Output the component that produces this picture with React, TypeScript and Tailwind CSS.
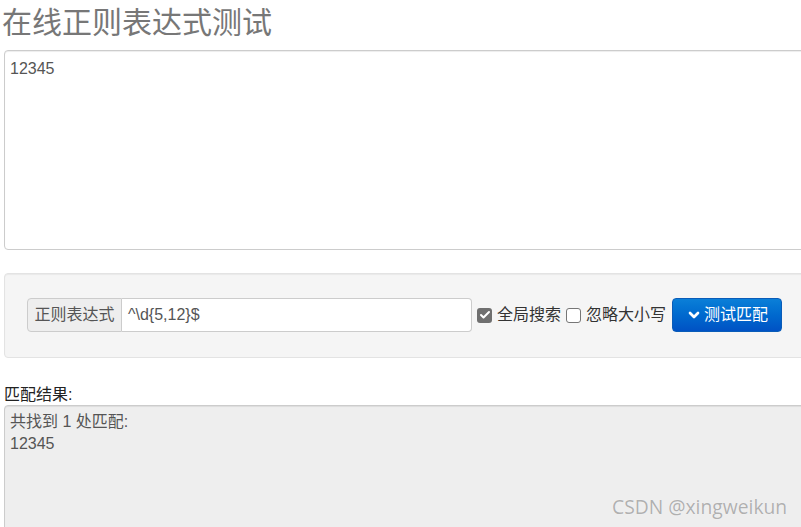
import { ChevronDown, Check } from "lucide-react";

const font = { fontFamily: '"Liberation Sans", "Noto Sans CJK SC", sans-serif' };

export default function App() {
  return (
    <div
      className="relative w-[801px] h-[527px] overflow-hidden bg-white text-[16px] text-[#333]"
      style={font}
    >
      <div className="w-[830px] pl-[4px]">
        {/* Title */}
        <h1 className="h-[50px] pt-[5px] text-[30px] leading-[36px] text-[#777] font-normal -ml-[2px]">
          在线正则表达式测试
        </h1>

        {/* Source textarea */}
        <div className="h-[200px] border border-[#ccc] rounded-[4px] shadow-[inset_0_1px_1px_rgba(0,0,0,0.075)] px-[5px] pt-[7px] text-[#555] leading-[22px]">
          12345
        </div>

        {/* Well */}
        <div className="mt-[23px] h-[85px] bg-[#f5f5f5] border border-[#e3e3e3] rounded-[4px] shadow-[inset_0_1px_1px_rgba(0,0,0,0.05)] pl-[22px] pt-[24px]">
          <div className="flex items-center">
            <div className="flex h-[34px]">
              <span className="w-[95px] flex items-center justify-center bg-[#eee] border border-[#ccc] rounded-l-[4px] text-[#555]">
                正则表达式
              </span>
              <div className="w-[350px] bg-white border border-l-0 border-[#ccc] rounded-r-[4px] flex items-center pl-[6px] text-[#555]">
                ^\d{"{"}5,12{"}"}$
              </div>
            </div>
            <span className="ml-[5px] w-[15px] h-[15px] rounded-[3px] bg-[#6f6f6f] flex items-center justify-center">
              <Check className="w-[12px] h-[12px] text-white" strokeWidth={4} />
            </span>
            <span className="ml-[5px] text-[#333]">全局搜索</span>
            <span className="ml-[5px] w-[15px] h-[15px] rounded-[3px] border border-[#767676] bg-white" />
            <span className="ml-[5px] text-[#333]">忽略大小写</span>
            <button className="ml-[6px] w-[110px] h-[34px] rounded-[4px] border border-[#0a5cb8] bg-gradient-to-b from-[#0b7fd8] to-[#0052c4] text-white flex items-center justify-center gap-[2px]">
              <ChevronDown className="w-[16px] h-[16px]" strokeWidth={4} />
              测试匹配
            </button>
          </div>
        </div>

        {/* Result */}
        <div className="mt-[26px] leading-[21px] text-[#222]">匹配结果:</div>
        <div className="h-[140px] bg-[#eee] border border-[#ccc] rounded-[4px] shadow-[inset_0_1px_1px_rgba(0,0,0,0.075)] px-[5px] pt-[5px] text-[#555] leading-[22px]">
          <div>共找到 1 处匹配:</div>
          <div>12345</div>
        </div>
      </div>

      {/* Watermark */}
      <div
        className="absolute left-[612px] top-[493px] text-[19.3px] text-[#b0b0b0] [text-shadow:0_0_1px_#fff]"
        style={{ fontFamily: '"Open Sans", "Liberation Sans", sans-serif' }}
      >
        CSDN @xingweikun
      </div>
    </div>
  );
}
